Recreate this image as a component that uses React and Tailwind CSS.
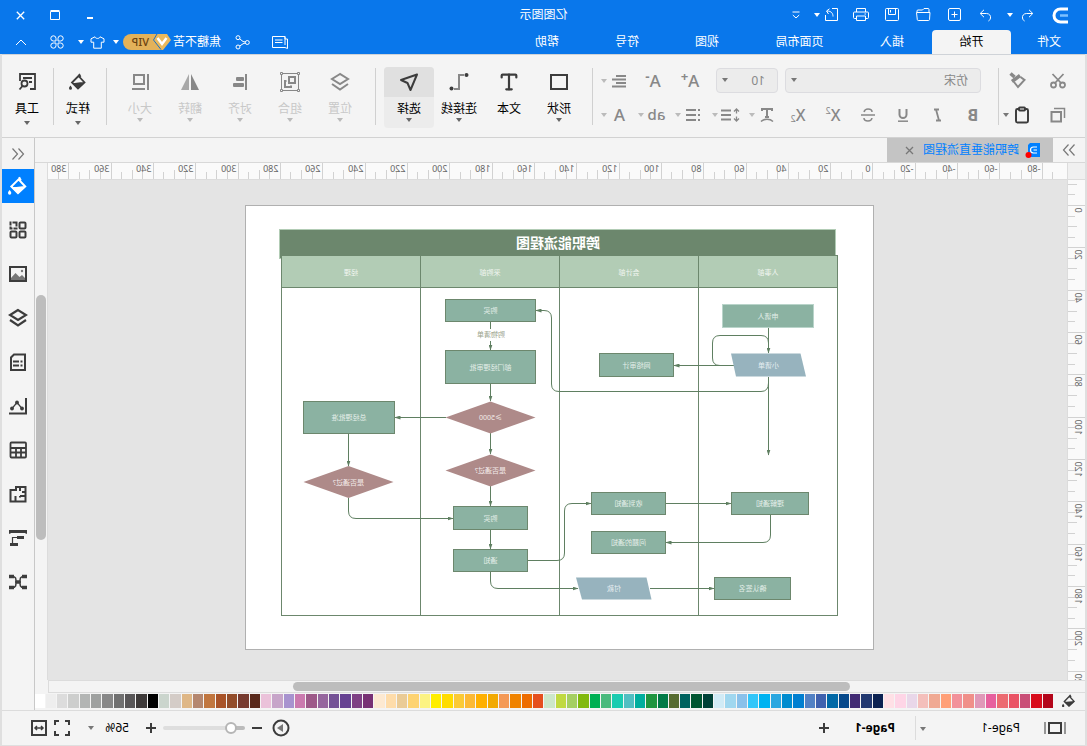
import React from "react";
import { Clipboard, Type } from "lucide-react";

const Svg = ({ w = 18, h = 18, sw = 1.5, children, className = "" }) => (
  <svg
    width={w}
    height={h}
    viewBox={`0 0 ${w} ${h}`}
    fill="none"
    stroke="currentColor"
    strokeWidth={sw}
    aria-hidden="true"
    className={`shrink-0 ${className}`}
  >
    {children}
  </svg>
);

const Arrow = ({ className = "text-[#777]" }) => (
  <svg width="6" height="4" viewBox="0 0 6 4" aria-hidden="true" className={`shrink-0 ${className}`}>
    <path d="M0 0h6L3 4z" fill="currentColor" />
  </svg>
);

/* ---------- quick access icons ---------- */
const Logo = () => (
  <Svg w={17} h={17}>
    <path d="M1 2h7.500a6.300 6.300 0 0 1 0 13H1" stroke="#fff" strokeWidth="3" />
    <path d="M1 8.500h8" stroke="#7cc0ff" strokeWidth="2.500" />
  </Svg>
);
const Undo = () => (
  <Svg w={13} h={13} sw={1}>
    <path d="M5 .8 1.200 4.500 5 8.200M1.500 4.500h6c3 0 4.500 2.500 4 4.500-.3 1.500-1 2.500-2 3" />
  </Svg>
);
const Redo = () => (
  <Svg w={13} h={13} sw={1}>
    <path d="M8 .8 11.800 4.500 8 8.200M11.500 4.500h-6c-3 0-4.500 2.500-4 4.500.3 1.500 1 2.500 2 3" />
  </Svg>
);
const NewDoc = () => (
  <Svg w={14} h={14} sw={1}>
    <rect x=".5" y=".5" width="12" height="12" rx="1.500" />
    <path d="M3.500 6.500h6M6.500 3.500v6" />
  </Svg>
);
const Folder = () => (
  <Svg w={16} h={14} sw={1}>
    <path d="M2 4.500V1.500a1 1 0 0 1 1-1h4l1.500 1.500H13a1 1 0 0 1 1 1v1.500M2 4.500h12.500l-.8 7.200a1 1 0 0 1-1 .8H2.500a1 1 0 0 1-1-.8L1 4.500z" />
  </Svg>
);
const SaveIcon = () => (
  <Svg w={14} h={14} sw={1}>
    <rect x=".5" y=".5" width="13" height="12" rx="1" />
    <path d="M3.500.5v6h7v-6M8.500 2v2.500" />
  </Svg>
);
const PrinterIcon = () => (
  <Svg w={16} h={14} sw={1}>
    <path d="M3.500 4V.5h9V4M3.500 10.500h-2a1 1 0 0 1-1-1V5a1 1 0 0 1 1-1h13a1 1 0 0 1 1 1v4.500a1 1 0 0 1-1 1h-2M3.500 8h9v4.500h-9zM3 6h1.500" />
  </Svg>
);
const ExportIcon = () => (
  <Svg w={14} h={14} sw={1}>
    <path d="M6 .5H.5v12h12V7M5 8.500c0-3 1.500-5.500 6-5.500M8.500.8 11.500 3 9.500 6" />
  </Svg>
);
const More = () => (
  <Svg w={8} h={8} sw={1}>
    <path d="M.5 1h7M.8 4 4 7l3.200-3" />
  </Svg>
);

/* ---------- account icons ---------- */
const Comment = () => (
  <Svg w={16} h={13} sw={1}>
    <path d="M3 .5h12.500v11H3l-2.500 1V3H3zM3 .5V9M5.500 4h7.500M5.500 6.500h7.500" />
  </Svg>
);
const Share = () => (
  <Svg w={15} h={15} sw={1}>
    <circle cx="2.700" cy="7.500" r="2" />
    <circle cx="12" cy="2.700" r="2" />
    <circle cx="12" cy="12" r="2" />
    <path d="M4.700 7 7 6.500 10.300 3.800M4.700 8l2.300.8 3.300 2.200" />
  </Svg>
);
const Shirt = () => (
  <Svg w={15} h={13} sw={1}>
    <path d="M5 .8 1 2.800v3.400h2.700v6h7.600v-6H14V2.800l-4-2C9.500 3 5.500 3 5 .8z" />
  </Svg>
);
const Clover = () => (
  <Svg w={14} h={14} sw={1}>
    <path d="M6 6H3.300A2.600 2.600 0 1 1 6 3.300zM8 6h2.700A2.600 2.600 0 1 0 8 3.300zM6 8H3.300A2.600 2.600 0 1 0 6 10.700zM8 8h2.700A2.600 2.600 0 1 1 8 10.700z" />
  </Svg>
);
const Caret = () => (
  <Svg w={12} h={7} sw={1}>
    <path d="M1 6l5-5 5 5" />
  </Svg>
);
const Gem = () => (
  <svg width="18" height="16" viewBox="0 0 18 16" aria-hidden="true" className="shrink-0 bg-[#0977eb]">
    <path d="M14 0h4v16h-8z" fill="#e3b25a" />
    <path d="M4 0h10l4 6-8 10H8L0 6z" fill="#eab95c" />
    <path d="M4.500 4 9 10l4.500-6" fill="none" stroke="#fff" strokeWidth="2.500" />
    <path d="M14 0l3.500 6-7.500 9.500" fill="none" stroke="#1b6fc4" strokeWidth="1" />
  </svg>
);

/* ---------- ribbon icons ---------- */
const ScissorsIcon = () => (
  <Svg w={16} h={16} sw={1.800}>
    <circle cx="3.500" cy="12" r="2.500" />
    <circle cx="12.500" cy="12" r="2.500" />
    <path d="M2.500 1 11 10M13.500 1 5 10" />
  </Svg>
);
const CopyIcon = () => (
  <Svg w={16} h={16} sw={2}>
    <path d="M1.500 11V1.500H12" strokeWidth="1.500" />
    <rect x="5" y="5" width="9.500" height="9.500" />
  </Svg>
);
const Painter = () => (
  <Svg w={17} h={17} sw={2}>
    <path d="M5.500 5 1.500 8 8 15l4-5" />
    <path d="M6 3.500 14 9.500M11.500 5 15.500 1.500" strokeWidth="3.500" />
  </Svg>
);
const Strike = () => (
  <Svg w={16} h={16} sw={1.500}>
    <path d="M12 5C11.500 3 10 2 8 2 5.500 2 4 3.200 4 5M4 11c.3 2 2 3 4 3 2.500 0 4-1.200 4-3M1 8h14" />
  </Svg>
);
const TextStyle = () => (
  <Svg w={14} h={16}>
    <path d="M2 4V2h10v2M7 2v8M5 10h4" strokeWidth="2" />
    <path d="M1 14.500c3-3 9-3 12 0" />
  </Svg>
);
const LineSpacing = () => (
  <Svg w={20} h={14}>
    <path d="M9 2.500h10M9 7h10M9 11.500h10" strokeWidth="2" />
    <path d="M3.500 1v4.500M3.500 8.500V13M1 3.500 3.500 1 6 3.500M1 10.500 3.500 13 6 10.500" strokeWidth="1.300" />
  </Svg>
);
const ListIcon = () => (
  <Svg w={16} h={14} sw={2}>
    <path d="M5 2h10M5 7h10M5 12h10M1 2h2M1 7h2M1 12h2" />
  </Svg>
);
const AlignIcon = () => (
  <Svg w={16} h={14} sw={1.800}>
    <path d="M1 2h10M1 5.500h14M1 9h10M1 12.500h14" />
  </Svg>
);
const RectIcon = () => (
  <Svg w={20} h={18} sw={2}>
    <rect x="2" y="2" width="16" height="14" />
  </Svg>
);
const Connector = () => (
  <Svg w={20} h={20} sw={2}>
    <path d="M5 3h5v14h5" stroke="#888" strokeWidth="2" />
    <circle cx="2.500" cy="3" r="2" fill="currentColor" stroke="none" />
    <circle cx="17.500" cy="16.500" r="2" fill="currentColor" stroke="none" />
  </Svg>
);
const Cursor = () => (
  <Svg w={20} h={20} sw={2}>
    <path d="M2 2.500 18 8l-6.500 3L8.500 18z" strokeLinejoin="round" />
  </Svg>
);
const Stack = ({ sw = 2 }) => (
  <Svg w={20} h={20} sw={sw}>
    <path d="M10 2 18 7l-8 5-8-5z" />
    <path d="m2 12 8 5.500L18 12" />
  </Svg>
);
const Group = () => (
  <Svg w={20} h={20} sw={1}>
    <rect x="1.500" y="1.500" width="17" height="17" />
    <path d="M.5.500h2v2h-2zM17.500.5h2v2h-2zM.5 17.500h2v2h-2zM17.500 17.500h2v2h-2z" fill="#f4f4f4" />
    <path d="M5 5h6v6H5zM13.500 9H15v6H9v-1.500" strokeWidth="2" />
  </Svg>
);
const Align = () => (
  <Svg w={16} h={18} sw={1.500}>
    <path d="M2 1v16" strokeWidth="2" />
    <rect x="4" y="4" width="8" height="4" fill="currentColor" stroke="none" rx="1" />
    <rect x="4" y="10" width="11" height="4" fill="currentColor" stroke="none" rx="1" />
  </Svg>
);
const Flip = () => (
  <Svg w={20} h={18}>
    <path d="M9 1v16H1z" fill="currentColor" stroke="none" />
    <path d="M11 1v16h8z" fill="currentColor" fillOpacity=".7" stroke="none" />
  </Svg>
);
const SizeIcon = () => (
  <Svg w={18} h={18} sw={2}>
    <rect x="5" y="2" width="10" height="9" />
    <path d="M1 1v16M4 16h13" />
  </Svg>
);
const Bucket = ({ s = 18 }) => (
  <svg width={s} height={s} viewBox="0 0 18 18" fill="none" stroke="currentColor" aria-hidden="true" className="shrink-0">
    <path d="M8 1 6.500 4M8.500 3 15 9.500l-6 6-6.500-6z" strokeWidth="1.800" />
    <path d="M2.500 9.500 9 16l6.500-6.500C11 11 7 8.500 2.500 9.500z" fill="currentColor" stroke="none" />
    <path d="M16.500 12.500c1.200 1.500 1.500 2 1.500 2.800a1.500 1.500 0 0 1-3 0c0-.8.500-1.300 1.500-2.800z" fill="currentColor" stroke="none" />
  </svg>
);
const Tools = () => (
  <Svg w={18} h={18} sw={1.800}>
    <path d="M6 16H1V1h15v7M4 5h9M4 9h3" />
    <circle cx="11.500" cy="10.500" r="3" />
    <path d="m13.500 13 3 3.500" />
  </Svg>
);

/* ---------- side bar icons ---------- */
const sideIcons = [
  ["填充", <Bucket s={20} />],
  [
    "符号库",
    <Svg w={18} h={18} sw={2}>
      <rect x="1.500" y="1.500" width="6" height="6" rx="1" />
      <rect x="10.500" y="1.500" width="6" height="6" strokeDasharray="4 1" />
      <rect x="1.500" y="10.500" width="6" height="6" rx="1" />
      <rect x="10.500" y="10.500" width="6" height="6" rx="1" />
    </Svg>,
  ],
  [
    "图片",
    <Svg w={18} h={16} sw={2}>
      <rect x="1" y="1" width="16" height="14" />
      <path d="M2 14v-2l3-3 2.500 2 4-4L16 12v2z" fill="#777" stroke="none" />
      <circle cx="5" cy="5" r="1.200" fill="#777" stroke="none" />
    </Svg>,
  ],
  ["图层", <Stack sw={2.200} />],
  [
    "页面",
    <Svg w={18} h={18} sw={2}>
      <path d="M2 1.500h11l3 3V17H2z" />
      <path d="M4.500 8.500h2M8 8.500h6M4.500 12.500h2M8 12.500h6" />
    </Svg>,
  ],
  [
    "图表",
    <Svg w={18} h={18} sw={2}>
      <path d="M1 1v15.500h17" />
      <path d="m5 11.500 5-6 5 6" strokeWidth="1.200" />
      <circle cx="5" cy="11.500" r="1.900" fill="currentColor" stroke="none" />
      <circle cx="10" cy="5.500" r="1.900" fill="currentColor" stroke="none" />
      <circle cx="15" cy="11.500" r="1.900" fill="currentColor" stroke="none" />
    </Svg>,
  ],
  [
    "表格",
    <Svg w={18} h={18} sw={1.800}>
      <rect x="1" y="1.500" width="15.500" height="15" rx="1" />
      <path d="M1 7h15M1 11.500h15M6 7v9M11 7v9" />
    </Svg>,
  ],
  [
    "平面图",
    <Svg w={18} h={18} sw={2}>
      <path d="M1.500 2h9.500v3h5.500v11.500h-15zM7 2v4M1.500 7H5M1.500 11H7M7 11v1.500M11.500 11v5" />
    </Svg>,
  ],
  [
    "甘特图",
    <Svg w={18} h={18} sw={3}>
      <path d="M0 2.500h18M3 8.500h7M9 15.500h8" />
      <path d="M10 8.500h4.500v7M.8 2v3M17.200 2v3" strokeWidth="1.200" />
    </Svg>,
  ],
  [
    "思维导图",
    <Svg w={18} h={16} sw={1.500}>
      <path d="M3 2.500c4 0 4 2 4 5.500s0 5.500-4 5.500M15 2.500c-4 0-4 2-4 5.500s0 5.500 4 5.500M6 8h6" />
      <path d="M0 2.500h5M13 2.500h5M0 13.500h5M13 13.500h5M7 8h4" strokeWidth="3.500" />
    </Svg>,
  ],
];

const palette = [
  "#b3051a", "#d80c1b", "#c94f77", "#ea5365", "#ec6b71", "#e7609e", "#e098b8", "#f08f89", "#f2919a", "#ff9f77",
  "#f0a993", "#f4bfbb", "#e9d7e9", "#fed5e6", "#ffe0e6", "#0c2252", "#223870", "#422b74", "#05488b", "#0068a6",
  "#3f61ae", "#5281c4", "#007fd0", "#008ccf", "#2aa7e0", "#00b3f1", "#32c6f9", "#8ac1ea", "#a0d7ef", "#d1ebf6",
  "#004137", "#005531", "#00635f", "#566c31", "#007a46", "#1f953f", "#00ae9e", "#52bfc2", "#1bccb0", "#4aba7d",
  "#00b053", "#81b90e", "#a5cf62", "#c0d941", "#cde7c9", "#e5501e", "#ed6c00", "#f08300", "#f49955", "#f2a900",
  "#ffb000", "#fcb934", "#fbca35", "#ffdc00", "#ffee00", "#fcf383", "#fdd371", "#eacb96", "#fedcaa", "#fde9d1",
  "#783174", "#7f4084", "#664192", "#755296", "#96669e", "#9d5989", "#cb7aaf", "#a893cf", "#c7a5c9", "#ebc2da",
  "#59281b", "#773a2f", "#934d2a", "#a95328", "#c1763f", "#b5876f", "#dfb786", "#d4ccc7", "#cbd5cd", "#000000",
  "#3e3a39", "#595758", "#717171", "#888888", "#9fa1a0", "#b3b5b4", "#cdcecd", "#dcdcdc", "#eeeeee", "#ffffff",
];

const IconBtn = ({ label, children, className = "w-[26px]" }) => (
  <button type="button" aria-label={label} className={`flex h-[25px] shrink-0 items-center justify-center text-[#888] ${className}`}>
    {children}
  </button>
);

const SplitBtn = ({ label, children }) => (
  <button type="button" aria-label={label} className="flex h-[25px] w-[37px] shrink-0 items-center text-[#888]">
    <span className="flex w-[25px] items-center justify-center">{children}</span>
    <Arrow className="text-[#bbb]" />
  </button>
);

const Divider = () => <div className="mt-[13px] h-[57px] w-px shrink-0 bg-[#d0d0d0]" />;

const BigBtn = ({ label, icon, arrow = true, active, disabled, narrow }) => (
  <button
    type="button"
    disabled={disabled}
    className={`mt-3 flex h-[61px] shrink-0 flex-col items-center rounded-sm text-[12px] ${narrow ? "w-10" : "w-[50px]"} ${
      disabled ? "text-[#c8c8c8]" : "text-black"
    } ${active ? "bg-[#ececec]" : ""}`}
  >
    <span
      className={`flex h-[30px] w-full items-center justify-center rounded-t-sm ${disabled ? "text-[#888]" : "text-[#3c3c3c]"} ${
        active ? "bg-[#e0e0e0]" : ""
      }`}
    >
      {icon}
    </span>
    <span className="mt-1 h-[16px] whitespace-nowrap leading-[16px]">{label}</span>
    {arrow && (
      <span className={narrow ? "mt-1" : "mt-px"}>
        <Arrow className={disabled ? "text-[#bbb]" : "text-[#666]"} />
      </span>
    )}
  </button>
);

/* ---------- rulers ---------- */
const STEP = 42.33;

function TopRuler() {
  const ticks = [];
  for (let i = -17; i <= 78; i++) {
    const x = Math.round(193.5 + (i * STEP) / 4) + 0.5;
    const major = i % 4 === 0;
    ticks.push(<path key={i} d={`M${x} ${major ? 0 : i % 2 === 0 ? 7 : 9}V17`} stroke="#d2d2d2" />);
    if (major)
      ticks.push(
        <text key={`t${i}`} x={x + 2} y="9" fontSize="9" fill="#666">
          {i * 5}
        </text>
      );
  }
  return (
    <svg className="h-full w-full min-w-0 border-b border-[#dcdcdc] bg-[#fafafa]" role="img" aria-label="水平标尺">
      {ticks}
    </svg>
  );
}

function LeftRuler() {
  const ticks = [];
  for (let i = -2; i <= 44; i++) {
    const y = Math.round(25 + (i * STEP) / 4) + 0.5;
    const major = i % 4 === 0;
    ticks.push(<path key={i} d={`M${major ? 0 : i % 2 === 0 ? 8 : 10} ${y}H17`} stroke="#d2d2d2" />);
    if (major)
      ticks.push(
        <text key={`t${i}`} transform={`translate(10 ${y + 2}) rotate(-90)`} textAnchor="end" fontSize="9" fill="#666">
          {i * 5}
        </text>
      );
  }
  return (
    <svg className="h-full w-full min-h-0 border-r border-[#dcdcdc] bg-[#fafafa]" role="img" aria-label="垂直标尺">
      {ticks}
    </svg>
  );
}

/* ---------- flow chart ---------- */
const Box = ({ x, y, w, h, label, stroke = "#6c876d" }) => (
  <g>
    <rect x={x} y={y} width={w} height={h} fill="#8bb2a2" stroke={stroke} />
    <text x={x + w / 2} y={y + h / 2 + 2.5} fill="#e4efe9">{label}</text>
  </g>
);
const Diamond = ({ x, y, label }) => (
  <g>
    <path d={`M${x - 45} ${y}L${x} ${y - 16}L${x + 45} ${y}L${x} ${y + 16}z`} fill="#ae8a89" />
    <text x={x} y={y + 2.5} fill="#f4eaea">{label}</text>
  </g>
);

const lanes = [
  [249.5, "人事部"],
  [388.5, "会计部"],
  [527.5, "采购部"],
  [666.5, "经理"],
];

const links = [
  "M318.5 327V353",
  "M353 365.5H413",
  "M318.5 377V455",
  "M318.5 383Q318.500 391.500 326 391.500H528Q535.500 391.500 535.500 384V318Q535.500 310.500 543 310.500H551",
  "M596.5 341V350",
  "M596.5 384V401",
  "M641 417.500H692",
  "M596.5 433V454",
  "M596.5 486V506",
  "M596.5 530V549",
  "M738.5 434V466",
  "M738.5 498V511Q738.500 518.500 731 518.500H634",
  "M559 560.500H530Q522.500 560.500 522.500 553V511Q522.500 503.500 515 503.500H496",
  "M596.5 572V581Q596.500 588.500 589 588.500H509",
  "M437 588.500H373",
  "M421 503.500H356",
  "M316.500 515V535Q316.500 542.500 324 542.500H421",
];

function Diagram() {
  return (
    <svg width="629" height="445" viewBox="213 205 629 445" fontSize="7" textAnchor="middle" role="img" aria-label="跨职能流程图">
      <defs>
        <marker id="tip" markerUnits="userSpaceOnUse" markerWidth="6" markerHeight="4" refX="5.500" refY="2" orient="auto">
          <path d="M0 0 6 2 0 4z" fill="#5f7f61" />
        </marker>
      </defs>
      <rect x="251.500" y="229.500" width="556" height="29" fill="#6c876d" stroke="#b2ccb5" />
      <text x="529" y="248" fontSize="14" fontWeight="700" fill="#fff">跨职能流程图</text>
      {lanes.map(([x, name]) => (
        <g key={name} stroke="#6c876d">
          <rect x={x} y="287.500" width="139" height="328" fill="#fff" />
          <rect x={x} y="255.500" width="139" height="32" fill="#b2ccb5" />
          <text x={x + 69.5} y="274.500" fill="#f2f7f2" stroke="none">{name}</text>
        </g>
      ))}
      <g fill="none" stroke="#5f7f61">
        {links.map((d) => (
          <path key={d} d={d} markerEnd="url(#tip)" />
        ))}
        <path d="M596.500 322V329M367 365.500Q374.500 365.500 374.500 358V343Q374.500 335.500 367 335.500H326Q318.500 335.500 318.500 343" />
      </g>
      <Box x={273.5} y={304.5} w={91} h={23} label="申请人" stroke="#b9d4ca" />
      <path d="M286.500 353.500H356L351 376.500H281z" fill="#97b3be" />
      <text x="318.500" y="367.500" fill="#e6eef1">小请单</text>
      <Box x={413.5} y={353.5} w={74} h={23} label="网络审计" />
      <Box x={551.5} y={299.5} w={90} h={22} label="购买" />
      <text x="596" y="337" fill="#9aa38c">购物清单</text>
      <Box x={551.5} y={350.5} w={90} h={33} label="部门经理审批" />
      <Diamond x={596.5} y={417.5} label="≥5000" />
      <Diamond x={596.5} y={470.5} label="是否通过?" />
      <Box x={692.5} y={401.5} w={91} h={32} label="总经理批准" />
      <Diamond x={738.5} y={482} label="是否通过?" />
      <Box x={559.5} y={506.5} w={74} h={23} label="购买" />
      <Box x={559.5} y={549.5} w={74} h={22} label="通知" />
      <Box x={421.5} y={492.5} w={74} h={22} label="收到通知" />
      <Box x={421.5} y={531.5} w={74} h={22} label="问题的通知" />
      <Box x={278.5} y={492.5} w={77} h={22} label="理解通知" />
      <path d="M440.500 577.500H511L505 599.500H435.500z" fill="#97b3be" />
      <text x="473" y="591" fill="#e6eef1">付款</text>
      <Box x={296.5} y={577.5} w={76} h={22} label="确认签名" />
    </svg>
  );
}

/* ---------- page sections ---------- */
function Header() {
  const quick = "flex h-[30px] w-[31px] shrink-0 items-center justify-center";
  const win = "flex h-7 w-[35px] items-center justify-center";
  const menu = "flex h-6 w-20 shrink-0 items-center justify-center";
  return (
    <header className="bg-[#0977eb] text-[12px] text-white">
      <div className="grid grid-cols-[1fr_auto_1fr] items-center">
        <div className="flex items-center pl-[18px]">
          <Logo />
          <button type="button" aria-label="撤销" className="ml-[18px] flex h-[30px] w-[33px] items-center gap-2">
            <Undo />
            <Arrow className="text-white" />
          </button>
          <button type="button" aria-label="恢复" className={quick}><Redo /></button>
          <button type="button" aria-label="新建" className={quick}><NewDoc /></button>
          <button type="button" aria-label="打开" className={quick}><Folder /></button>
          <button type="button" aria-label="保存" className={quick}><SaveIcon /></button>
          <button type="button" aria-label="打印" className={quick}><PrinterIcon /></button>
          <button type="button" aria-label="导出" className="flex h-[30px] items-center gap-1 pl-2">
            <ExportIcon />
            <Arrow className="text-white" />
          </button>
          <button type="button" aria-label="更多" className="ml-3 flex h-[30px] w-3 items-center justify-center"><More /></button>
        </div>
        <h1 className="whitespace-nowrap">亿图图示</h1>
        <div className="flex justify-end pr-[3px]">
          <button type="button" aria-label="最小化" className={win}><Svg w={8} h={10}><path d="M1 8h6" strokeWidth="2" /></Svg></button>
          <button type="button" aria-label="最大化" className={win}><Svg w={10} h={10} sw={1}><path d="M.5 1.500h9v8h-9zM.5.5h9" /></Svg></button>
          <button type="button" aria-label="关闭" className={win}><Svg w={9} h={9} sw={1.300}><path d="m.8.8 7.400 7.400M8.200.8.8 8.200" /></Svg></button>
        </div>
      </div>
      <nav className="flex h-6 items-center">
        <button type="button" className="flex h-6 w-[76px] shrink-0 items-center justify-center">文件</button>
        <button type="button" className="flex h-6 w-[79px] shrink-0 items-center justify-center rounded-t-sm bg-[#f4f4f4] text-black">开始</button>
        <button type="button" className={menu}>插入</button>
        <button type="button" className="flex h-6 w-[105px] shrink-0 items-center justify-center">页面布局</button>
        <button type="button" className={menu}>视图</button>
        <button type="button" className={menu}>符号</button>
        <button type="button" className={menu}>帮助</button>
        <div className="ml-auto flex shrink-0 items-center pr-[15px]">
          <button type="button" aria-label="评论"><Comment /></button>
          <button type="button" aria-label="分享" className="ml-[22px]"><Share /></button>
          <a href="#account" className="ml-3.5 flex h-6 items-center whitespace-nowrap">焦糖不苦</a>
          <span className="ml-0.5 flex h-4 items-center overflow-hidden rounded-r-full bg-[#e3b25a] text-[11px] font-medium leading-4 text-[#6b4210]">
            <Gem />
            <span className="w-[30px] pl-1">VIP</span>
          </span>
          <span className="ml-1"><Arrow className="text-white" /></span>
          <button type="button" aria-label="主题" className="ml-2 flex items-center gap-1.5"><Shirt /><Arrow className="text-white" /></button>
          <button type="button" aria-label="应用" className="ml-3.5"><Clover /></button>
          <button type="button" aria-label="收起功能区" className="ml-[23px]"><Caret /></button>
        </div>
      </nav>
    </header>
  );
}

function Ribbon() {
  const field =
    "block h-[25px] w-full appearance-none rounded-sm border border-[#dcdce0] bg-[#ececec] py-0 pl-3 text-[12px] leading-[18px] text-[#888]";
  return (
    <section aria-label="开始" className="flex h-[84px] items-start border-y border-t-[#cfd3d8] border-b-[#d2d2d2]">
      <div className="ml-3.5 mt-[13px] flex w-[72px] shrink-0 flex-col gap-[9px]">
        <div className="flex gap-3.5">
          <IconBtn label="剪切"><ScissorsIcon /></IconBtn>
          <IconBtn label="格式刷"><Painter /></IconBtn>
        </div>
        <div className="flex items-center gap-3.5">
          <IconBtn label="复制"><CopyIcon /></IconBtn>
          <button type="button" aria-label="粘贴" className="flex h-[25px] items-center gap-1 text-[#3c3c3c]">
            <Clipboard size={18} strokeWidth={2.6} />
            <Arrow />
          </button>
        </div>
      </div>
      <Divider />
      <div className="ml-3 mt-[13px] flex w-[393px] shrink-0 flex-col gap-[9px]">
        <div className="flex h-[25px] pl-[5px]">
          <div className="relative w-[196px]">
            <select aria-label="字体" className={field} defaultValue="仿宋"><option>仿宋</option><option>宋体</option></select>
            <span className="pointer-events-none absolute right-1.5 top-2.5 flex"><Arrow /></span>
          </div>
          <div className="relative ml-[7px] w-[62px]">
            <select aria-label="字号" className={field} defaultValue="10"><option>10</option><option>12</option></select>
            <span className="pointer-events-none absolute right-1.5 top-2.5 flex"><Arrow /></span>
          </div>
          <div className="ml-[13px] flex gap-[11px]">
            <IconBtn label="增大字号"><span className="text-[17px] font-medium leading-none">A</span><span className="mb-2 text-[13px] font-bold leading-none">+</span></IconBtn>
            <IconBtn label="减小字号"><span className="text-[17px] font-medium leading-none">A</span><span className="mb-2 text-[13px] font-bold leading-none">-</span></IconBtn>
          </div>
          <div className="ml-2"><SplitBtn label="对齐方式"><AlignIcon /></SplitBtn></div>
        </div>
        <div className="flex">
          <div className="mr-[5px] flex gap-[9px]">
            <IconBtn label="加粗"><span className="text-[16px] font-bold leading-none">B</span></IconBtn>
            <IconBtn label="斜体"><Svg w={12} h={14} sw={1.800}><path d="M5 1.500h5M3 12.500h5M8 1.500l-3 11" /></Svg></IconBtn>
            <IconBtn label="下划线"><Svg w={12} h={14}><path d="M2.500 1v5.500a3.500 3.500 0 0 0 7 0V1" strokeWidth="2" /><path d="M1 13.200h10" /></Svg></IconBtn>
            <IconBtn label="删除线"><Strike /></IconBtn>
            <IconBtn label="上标"><span className="text-[16px] font-medium leading-none">X</span><span className="mb-2 text-[9px] leading-none">2</span></IconBtn>
            <IconBtn label="下标"><span className="text-[16px] font-medium leading-none">X</span><span className="mt-2 text-[9px] leading-none">2</span></IconBtn>
          </div>
          <SplitBtn label="文字样式"><TextStyle /></SplitBtn>
          <SplitBtn label="行距"><LineSpacing /></SplitBtn>
          <SplitBtn label="项目符号"><ListIcon /></SplitBtn>
          <SplitBtn label="突出显示"><span className="text-[15px] font-medium leading-none">ab</span></SplitBtn>
          <SplitBtn label="字体颜色"><span className="text-[17px] font-medium leading-none">A</span></SplitBtn>
        </div>
      </div>
      <Divider />
      <div className="ml-2 flex shrink-0">
        <BigBtn label="形状" icon={<RectIcon />} />
        <BigBtn label="文本" icon={<Type size={22} strokeWidth={2.4} />} arrow={false} />
        <BigBtn label="连接线" icon={<Connector />} />
        <BigBtn label="选择" icon={<Cursor />} active />
      </div>
      <div className="ml-2"><Divider /></div>
      <div className="ml-2.5 flex shrink-0">
        <BigBtn label="位置" icon={<Stack />} disabled />
        <BigBtn label="组合" icon={<Group />} disabled />
        <BigBtn label="对齐" icon={<Align />} disabled />
        <BigBtn label="翻转" icon={<Flip />} disabled />
        <BigBtn label="大小" icon={<SizeIcon />} disabled />
      </div>
      <div className="ml-2"><Divider /></div>
      <div className="ml-2"><BigBtn label="样式" icon={<Bucket />} narrow /></div>
      <div className="ml-1"><Divider /></div>
      <div className="ml-1.5"><BigBtn label="工具" icon={<Tools />} narrow /></div>
    </section>
  );
}

function Workspace() {
  return (
    <div className="flex min-w-0 flex-1 flex-col">
      <div className="flex h-[25px] border-b border-[#d8d8d8]">
        <button type="button" aria-label="展开面板" className="flex w-8 shrink-0 items-center justify-center text-[#777]">
          <Svg w={14} h={14} sw={1.200}><path d="m1.500 1.500 5 5.500-5 5.500M7.500 1.500l5 5.500-5 5.500" /></Svg>
        </button>
        <div className="flex w-[166px] shrink-0 items-center bg-[#c4c4c4] text-[12px] text-[#0080ff]">
          <svg width="16" height="16" viewBox="0 0 16 16" aria-hidden="true" className="ml-3 shrink-0">
            <path d="M1 1h10l2 2v12H1z" fill="#0080ff" />
            <path d="M4 5h3.500a2.800 2.800 0 0 1 0 6H4M4 8h3.500" fill="none" stroke="#fff" strokeWidth="1.200" />
            <circle cx="12.500" cy="13" r="3" fill="#f00" />
          </svg>
          <span className="ml-1.5 whitespace-nowrap">跨职能垂直流程图</span>
          <button type="button" aria-label="关闭标签" className="ml-[9px] flex h-5 w-[9px] items-center text-[#777]">
            <Svg w={9} h={9} sw={1.300}><path d="m1 1 7 7M8 1 1 8" /></Svg>
          </button>
        </div>
      </div>
      <div className="grid min-h-0 flex-1 grid-cols-[18px_1fr_13px] grid-rows-[17px_minmax(500px,1fr)]">
        <div className="border-b border-r border-[#dcdcdc] bg-[#f0f0f0]" />
        <div className="min-w-0 overflow-hidden"><TopRuler /></div>
        <div className="row-span-2 border-l border-[#dcdcdc] bg-[#f4f4f4] px-px pt-[132px]">
          <div className="h-[245px] rounded-full bg-[#bdbdbd]" />
        </div>
        <div className="min-h-0 overflow-hidden"><LeftRuler /></div>
        <div className="min-w-0 overflow-hidden bg-[#e4e4e4] pl-[193px] pt-[25px]">
          <div className="w-max border border-[#b0b0b0] bg-white">
            <div className="-m-px"><Diagram /></div>
          </div>
        </div>
      </div>
      <div className="mr-[13px] border-y border-r border-[#dcdcdc] py-px">
        <div className="ml-[235px] h-[9px] w-[557px] rounded-full bg-[#bdbdbd]" />
      </div>
      <div className="flex h-[17px] items-start pt-px">
        <button type="button" aria-label="填充颜色" className="flex w-8 shrink-0 items-center justify-center text-[#3c3c3c]"><Bucket s={14} /></button>
        <div className="flex h-[14px] flex-1 gap-px">
          {palette.map((c) => (
            <button key={c} type="button" aria-label={c} className="h-full min-w-0 flex-1" style={{ background: c }} />
          ))}
        </div>
      </div>
    </div>
  );
}

function SideBar() {
  return (
    <aside className="flex w-[33px] shrink-0 flex-col border-l border-[#c8c8c8]">
      <button type="button" aria-label="收起侧栏" className="flex h-[31px] items-center justify-center text-[#777]">
        <Svg w={14} h={14} sw={1.200}><path d="m6.500 1.500-5 5.500 5 5.500M12.500 1.500l-5 5.500 5 5.500" /></Svg>
      </button>
      <div className="flex flex-col gap-2.5">
        {sideIcons.map(([label, icon], i) => (
          <button
            key={label}
            type="button"
            aria-label={label}
            className={`flex h-[34px] items-center justify-center ${i === 0 ? "bg-[#0080ff] text-white" : "text-[#3c3c3c]"}`}
          >
            {icon}
          </button>
        ))}
      </div>
    </aside>
  );
}

function StatusBar() {
  return (
    <footer className="flex h-[35px] items-center border-t border-[#dcdcdc] pb-px text-[12px] text-[#3c3c3c]">
      <button type="button" aria-label="页面视图" className="ml-[19px] shrink-0">
        <Svg w={22} h={14}><path d="M1 1v12M21 1v12" stroke="#777" /><rect x="5" y="2" width="12" height="10" strokeWidth="2" /></Svg>
      </button>
      <div className="relative ml-6 w-[104px] shrink-0">
        <select aria-label="页面" className="block w-full appearance-none text-black" defaultValue="Page-1"><option>Page-1</option></select>
        <span className="pointer-events-none absolute right-1 top-2 flex"><Arrow /></span>
      </div>
      <div className="h-6 w-px bg-[#dcdcdc]" />
      <button type="button" className="ml-5 font-bold text-black">Page-1</button>
      <button type="button" aria-label="添加页面" className="ml-[26px]"><Svg w={10} h={10} sw={2}><path d="M0 5h10M5 0v10" /></Svg></button>
      <div className="ml-auto flex shrink-0 items-center">
        <button type="button" aria-label="播放">
          <Svg w={18} h={18} sw={2}><circle cx="9" cy="9" r="7.500" /><path d="M7 5v8l6-4z" fill="#777" stroke="none" /></Svg>
        </button>
        <button type="button" aria-label="缩小" className="ml-2.5"><Svg w={10} h={10} sw={2}><path d="M0 5h10" /></Svg></button>
        <input
          type="range"
          aria-label="缩放"
          min="0"
          max="100"
          defaultValue="12"
          className="ml-[7px] h-1 w-[82px] appearance-none rounded-full bg-linear-to-r from-[#bbb] from-15% to-[#dedede] to-15% [&::-webkit-slider-thumb]:h-3 [&::-webkit-slider-thumb]:w-3 [&::-webkit-slider-thumb]:appearance-none [&::-webkit-slider-thumb]:rounded-full [&::-webkit-slider-thumb]:border-2 [&::-webkit-slider-thumb]:border-[#b5b5b5] [&::-webkit-slider-thumb]:bg-white"
        />
        <button type="button" aria-label="放大" className="ml-[7px]"><Svg w={10} h={10} sw={2}><path d="M0 5h10M5 0v10" /></Svg></button>
        <button type="button" className="ml-[17px] flex w-[41px] items-center justify-between text-black">56% <Arrow /></button>
        <button type="button" aria-label="全屏" className="ml-[18px]">
          <Svg w={16} h={16} sw={2}><path d="M1 5V1h4M11 1h4v4M15 11v4h-4M5 15H1v-4" /></Svg>
        </button>
        <button type="button" aria-label="适应宽度" className="ml-[7px] mr-[29px]">
          <Svg w={16} h={16} sw={2}><rect x="1" y="1" width="14" height="14" /><path d="M4 8h8M6 6 4 8l2 2M10 6l2 2-2 2" strokeWidth="1.500" /></Svg>
        </button>
      </div>
    </footer>
  );
}

export default function App() {
  return (
    <div className="flex min-h-screen -scale-x-100 flex-col overflow-hidden bg-[#f4f4f4] font-['Noto_Sans','Noto_Sans_CJK_SC',sans-serif]">
      <Header />
      <main className="flex flex-1 flex-col border-x-2 border-b-2 border-[#dfdfdf]">
        <Ribbon />
        <div className="flex flex-1">
          <Workspace />
          <SideBar />
        </div>
        <StatusBar />
      </main>
    </div>
  );
}
